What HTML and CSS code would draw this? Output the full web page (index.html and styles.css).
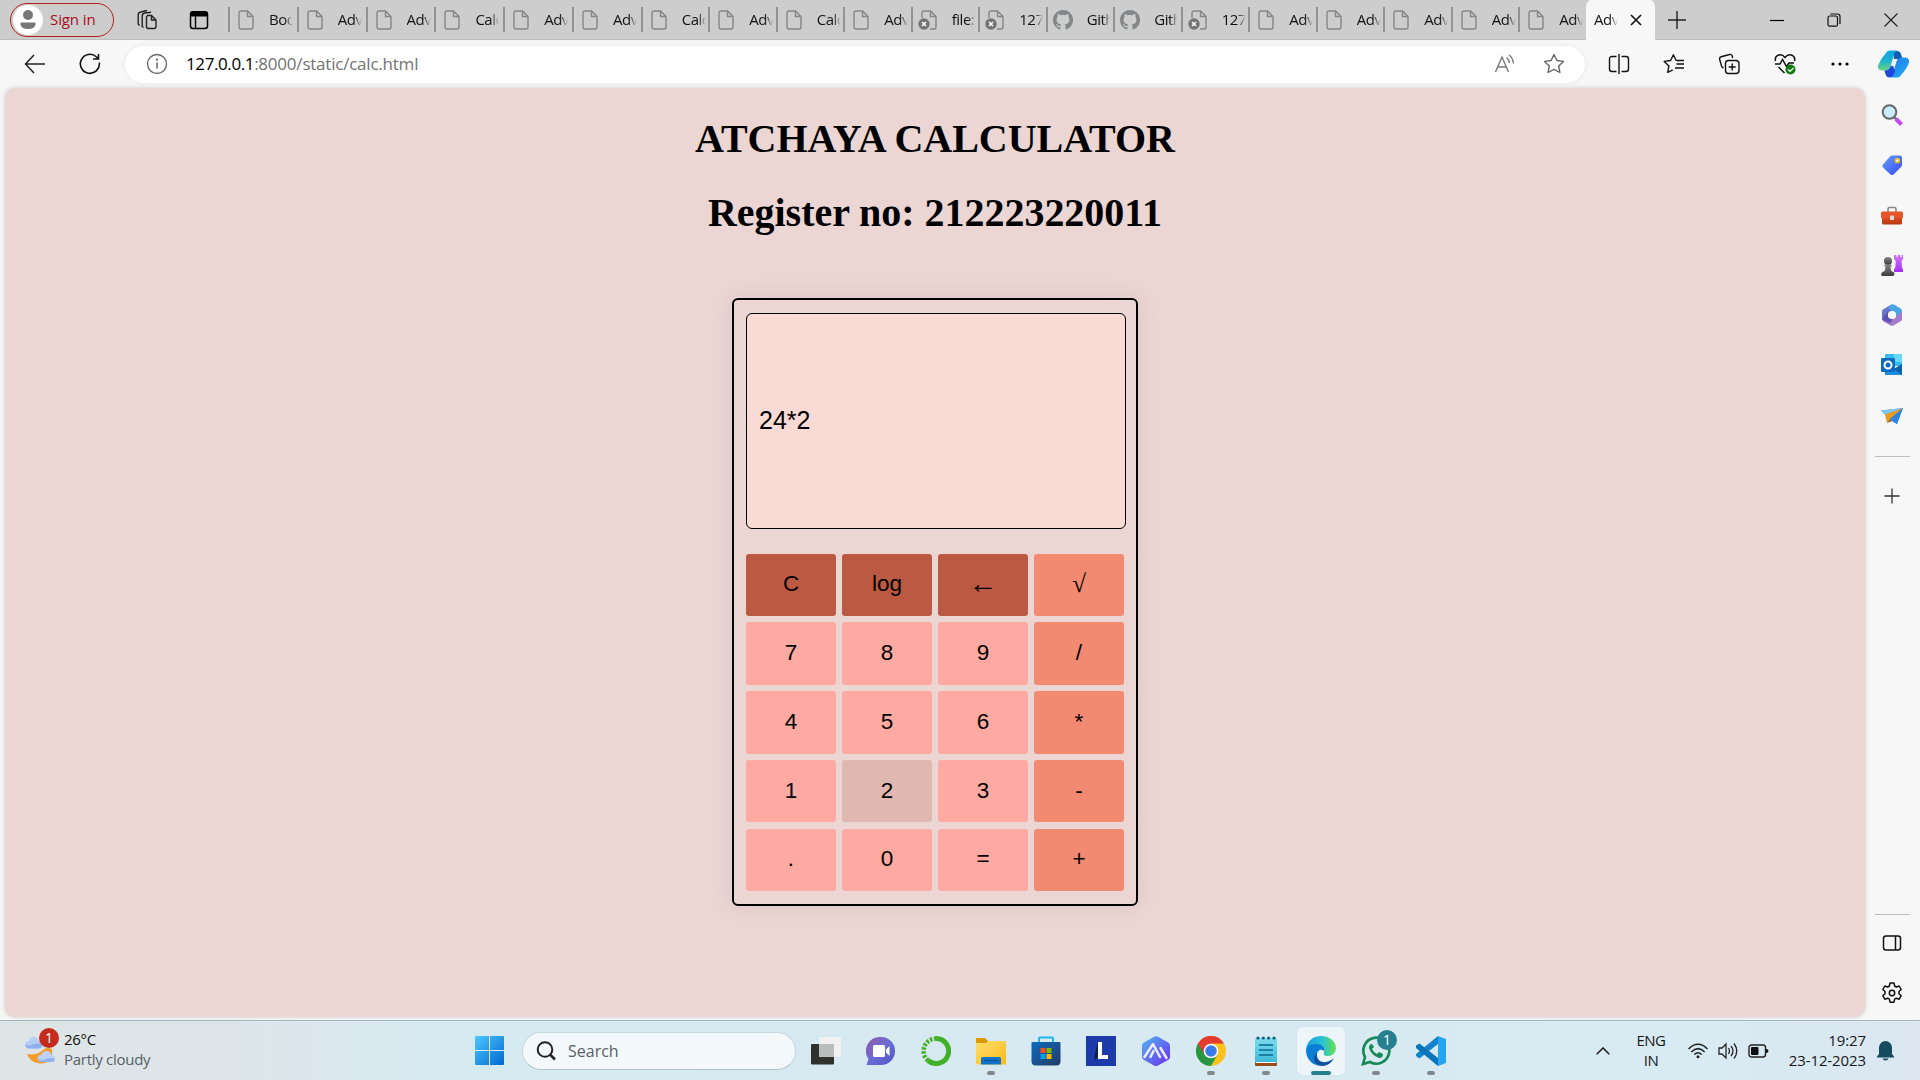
FILE: index.html
```html
<!DOCTYPE html>
<html lang="en">
<head>
<meta charset="utf-8">
<title>Advanced Calculator</title>
<link rel="stylesheet" href="styles.css">
</head>
<body>
<svg class="defs" width="0" height="0">
  <defs>
    <symbol id="file" viewBox="0 0 16 20"><path d="M3 1h6.500L15 6.500V17a2 2 0 0 1-2 2H3a2 2 0 0 1-2-2V3a2 2 0 0 1 2-2zM9.500 1v5.500H15" fill="none" stroke="#858585" stroke-width="1.400"/></symbol>
    <symbol id="filex" viewBox="0 0 20 20"><path d="M4 8V3a2 2 0 0 1 2-2h6.500L18 6.500V17a2 2 0 0 1-2 2h-4M12.500 1v5.500H18" fill="none" stroke="#858585" stroke-width="1.400"/><circle cx="6" cy="14" r="5.700" fill="#747474"/><path d="M4 12l4 4M8 12l-4 4" stroke="#fff" stroke-width="1.500"/></symbol>
    <symbol id="github" viewBox="0 0 16 16"><path fill="#858688" d="M8 0C3.580 0 0 3.580 0 8c0 3.540 2.290 6.530 5.470 7.590.4.070.55-.17.55-.38 0-.19-.01-.82-.01-1.490-2.010.37-2.530-.49-2.690-.94-.09-.23-.48-.94-.82-1.130-.28-.15-.68-.52-.01-.53.63-.01 1.080.58 1.230.82.72 1.210 1.870.87 2.330.66.07-.52.28-.87.51-1.070-1.780-.2-3.640-.89-3.640-3.950 0-.87.31-1.590.82-2.150-.08-.2-.36-1.020.08-2.120 0 0 .67-.21 2.200.82a7.600 7.600 0 0 1 4 0c1.530-1.040 2.200-.82 2.200-.82.44 1.100.16 1.920.08 2.120.51.56.82 1.270.82 2.150 0 3.070-1.870 3.750-3.650 3.950.29.25.54.73.54 1.480 0 1.070-.01 1.930-.01 2.200 0 .21.15.46.55.38A8 8 0 0 0 8 0z"/></symbol>
    <linearGradient id="gBlue" x1="0" y1="0" x2="1" y2="1"><stop offset="0" stop-color="#4cc9ff"/><stop offset="1" stop-color="#0067cf"/></linearGradient>
    <linearGradient id="gTag" x1="0" y1="0" x2="1" y2="1"><stop offset="0" stop-color="#62a2ff"/><stop offset="1" stop-color="#3a48f5"/></linearGradient>
    <linearGradient id="gRook" x1="0" y1="0" x2="0" y2="1"><stop offset="0" stop-color="#d378ff"/><stop offset="1" stop-color="#a42df0"/></linearGradient>
    <linearGradient id="gGrey" x1="0" y1="0" x2="0" y2="1"><stop offset="0" stop-color="#858585"/><stop offset="1" stop-color="#3c3c3c"/></linearGradient>
    <linearGradient id="gRed" x1="0" y1="0" x2="0" y2="1"><stop offset="0" stop-color="#d84b20"/><stop offset="1" stop-color="#b83510"/></linearGradient>
    <linearGradient id="gCopA" x1="0" y1="0" x2="0" y2="1"><stop offset="0" stop-color="#14a5e4"/><stop offset=".5" stop-color="#1bb0cf"/><stop offset="1" stop-color="#6ad67c"/></linearGradient>
    <linearGradient id="gCopB" x1="0" y1="0" x2="1" y2="1"><stop offset="0" stop-color="#2a70e2"/><stop offset="1" stop-color="#18b4f8"/></linearGradient>
    <linearGradient id="gFold" x1="0" y1="0" x2="1" y2="1"><stop offset="0" stop-color="#ffdf6c"/><stop offset="1" stop-color="#fbb91c"/></linearGradient>
    <linearGradient id="gChat" x1="0" y1="0" x2="1" y2="1"><stop offset="0" stop-color="#9558a7"/><stop offset=".5" stop-color="#6a6cd6"/><stop offset="1" stop-color="#5055c4"/></linearGradient>
    <linearGradient id="gStore" x1="0" y1="0" x2="1" y2="1"><stop offset="0" stop-color="#0d6cbd"/><stop offset="1" stop-color="#243a66"/></linearGradient>
    <linearGradient id="gHex" x1="0" y1="0" x2="1" y2="1"><stop offset="0" stop-color="#52b6ee"/><stop offset="1" stop-color="#6b2df0"/></linearGradient>
    <linearGradient id="gEdge" x1="0" y1="0" x2="1" y2="0"><stop offset="0" stop-color="#149bdf"/><stop offset=".55" stop-color="#2bc3d2"/><stop offset="1" stop-color="#66e04c"/></linearGradient>
    <linearGradient id="gNote" x1="0" y1="0" x2="0" y2="1"><stop offset="0" stop-color="#7bdcec"/><stop offset="1" stop-color="#3db7d8"/></linearGradient>
  </defs>
</svg>

<header class="tabstrip">
  <div class="signin"><span class="avatar"><svg width="30" height="30" viewBox="0 0 30 30"><circle cx="15" cy="10" r="5" fill="#777"/><path d="M7.500 17.500h15v2q-1 4.500-7.500 4.500t-7.500-4.500z" fill="#777"/></svg></span><span class="signin-text">Sign in</span></div>
  <svg class="workspaces" width="22" height="22" viewBox="0 0 22 22" fill="none" stroke="#222" stroke-width="1.400"><path d="M12.500 6.500h4L21 11v6.500a2 2 0 0 1-2 2h-5.500a2 2 0 0 1-2-2v-9a2 2 0 0 1 1-2zM16.500 6.500V11H21M8.500 18.500l-1.300-1V7q0-2.500 2.500-3l6.300-.8M4.500 16.500L3.200 15V6q0-2.500 2.500-3L12 1.500"/></svg>
  <svg class="tabmenu" width="20" height="20" viewBox="0 0 20 20"><rect x="1.500" y="2" width="17" height="16.500" rx="2.500" fill="none" stroke="#000" stroke-width="1.500"/><path d="M1 6.500V4q0-3 3-3h12q3 0 3 3v2.500z"/><path d="M6.500 6v12" stroke="#000" stroke-width="1.400"/></svg>
  <div class="tabs">
    <div class="tab wide"><svg><use href="#file"/></svg><span>Boo</span></div>
    <div class="tab wide"><svg><use href="#file"/></svg><span>Adv</span></div>
    <div class="tab wide"><svg><use href="#file"/></svg><span>Adv</span></div>
    <div class="tab wide"><svg><use href="#file"/></svg><span>Calc</span></div>
    <div class="tab wide"><svg><use href="#file"/></svg><span>Adv</span></div>
    <div class="tab wide"><svg><use href="#file"/></svg><span>Adv</span></div>
    <div class="tab"><svg><use href="#file"/></svg><span>Calc</span></div>
    <div class="tab"><svg><use href="#file"/></svg><span>Adv</span></div>
    <div class="tab"><svg><use href="#file"/></svg><span>Calc</span></div>
    <div class="tab"><svg><use href="#file"/></svg><span>Adv</span></div>
    <div class="tab big"><svg><use href="#filex"/></svg><span>file:</span></div>
    <div class="tab big"><svg><use href="#filex"/></svg><span>127</span></div>
    <div class="tab big"><svg><use href="#github"/></svg><span>Gith</span></div>
    <div class="tab big"><svg><use href="#github"/></svg><span>Gith</span></div>
    <div class="tab big"><svg><use href="#filex"/></svg><span>127</span></div>
    <div class="tab"><svg><use href="#file"/></svg><span>Adv</span></div>
    <div class="tab"><svg><use href="#file"/></svg><span>Adv</span></div>
    <div class="tab"><svg><use href="#file"/></svg><span>Adv</span></div>
    <div class="tab"><svg><use href="#file"/></svg><span>Adv</span></div>
    <div class="tab"><svg><use href="#file"/></svg><span>Adv</span></div>
  </div>
  <div class="tab-active"><span>Adv</span><svg width="12" height="12" viewBox="0 0 12 12"><path d="M1 1l10 10M11 1L1 11" stroke="#111" stroke-width="1.600"/></svg></div>
  <svg class="newtab" width="18" height="18" viewBox="0 0 18 18"><path d="M9 0v18M0 9h18" stroke="#222" stroke-width="1.400"/></svg>
  <div class="winctl">
    <svg width="14" height="14" viewBox="0 0 14 14"><path d="M0 7.500h14" stroke="#000" stroke-width="1.200"/></svg>
    <svg width="14" height="14" viewBox="0 0 14 14" fill="none" stroke="#111" stroke-width="1.200"><rect x="1" y="3" width="9.500" height="10.200" rx="1.800"/><path d="M3.500 1h7q2.500 0 2.500 2.500V11"/></svg>
    <svg width="14" height="14" viewBox="0 0 14 14"><path d="M.5.500l13 13M13.500.500l-13 13" stroke="#222" stroke-width="1.200"/></svg>
  </div>
</header>

<div class="toolbar">
  <svg class="back" width="22" height="20" viewBox="0 0 22 20" fill="none" stroke="#222" stroke-width="1.500"><path d="M10 1L1.500 10l8.500 9M1.500 10H21"/></svg>
  <svg class="reload" width="22" height="22" viewBox="0 0 22 22" fill="none" stroke="#111" stroke-width="1.600"><path d="M20.300 9.500A9.500 9.500 0 1 1 17.500 4L19 5.500M19.500 1v5h-5.500"/></svg>
  <div class="address">
    <svg width="22" height="22" viewBox="0 0 22 22"><circle cx="11" cy="11" r="9.500" fill="none" stroke="#666" stroke-width="1.300"/><path d="M11 9.500v6" stroke="#666" stroke-width="1.500"/><circle cx="11" cy="6.700" r="1.100" fill="#666"/></svg>
    <span class="url"><b>127.0.0.1</b>:8000/static/calc.html</span>
    <svg class="read" width="22" height="20" viewBox="0 0 22 20" fill="none" stroke="#777" stroke-width="1.400"><path d="M1.500 18L8 3l6.500 15M4 13h8M12.500 3.500q2.500 2 3 5.500M15 1q4 3 4.500 8.500"/></svg>
    <svg class="fav" width="22" height="22" viewBox="0 0 22 22" fill="none" stroke="#666" stroke-width="1.400" stroke-linejoin="round"><path d="M11 1.500l2.900 6 6.600.9-4.800 4.600 1.200 6.500L11 16.400l-5.900 3.100 1.200-6.500L1.500 8.400l6.600-.9z"/></svg>
  </div>
  <div class="actions">
    <svg width="22" height="22" viewBox="0 0 22 22" fill="none" stroke="#111" stroke-width="1.400"><path d="M8.500 3.500H4q-2.500 0-2.500 2.500v10q0 2.500 2.500 2.500h4.500M13.500 3.500H18q2.500 0 2.500 2.500v10q0 2.500-2.500 2.500h-4.500M11 1v20"/></svg>
    <svg width="22" height="22" viewBox="0 0 22 22" fill="none" stroke="#111" stroke-width="1.400" stroke-linejoin="round"><path d="M16 7.700l-3-.4-2.600-5.500-2.800 5.700L1.200 8.400l4.700 4.500-1.200 6.500 5-2.600M13.500 11H21M12 15h9M14 7.500h7"/></svg>
    <svg width="22" height="22" viewBox="0 0 22 22" fill="none" stroke="#111" stroke-width="1.400"><rect x="7.500" y="7.500" width="13.500" height="13" rx="3"/><path d="M14.200 10.500v7M10.700 14h7M5.500 15l-.8-.4q-1-.5-1.300-2L1.700 6.500Q1.200 4.500 3.200 3.700L11.500 1.500q2-.5 2.500 1l.7 2.500"/></svg>
    <svg width="22" height="22" viewBox="0 0 22 22" fill="none" stroke="#111" stroke-width="1.500"><path d="M1.500 8Q.5 4 4 2.200 8 .7 11 4.500 14 .7 18 2.200q3.500 1.800 2.500 6M1 11h5l2.500-4.500 4 7L15 10h5M4.500 14l6 6"/><circle cx="16.500" cy="16.500" r="5" fill="#107c10" stroke="none"/><path d="M14 16.500l2 2 3.500-3.500" stroke="#fff" stroke-width="1.200"/></svg>
    <svg width="22" height="22" viewBox="0 0 22 22"><circle cx="4" cy="11" r="1.600"/><circle cx="11" cy="11" r="1.600"/><circle cx="18" cy="11" r="1.600"/></svg>
  </div>
  <svg class="copilot" width="31" height="28" viewBox="0 0 31 28"><path d="M15 1h4q3 0 4 3l1.500 5H16z" fill="#135db0"/><path d="M8 3q1-2.500 4-2.500h8q-3 .3-4 4l-3.500 12q-1.200 4-5 4H4q-5-.5-4-5Q2.500 9 8 3z" fill="url(#gCopA)"/><path d="M23 25q-1 2.500-4 2.500h-8q3-.3 4-4l3.500-12q1.200-4 5-4H27q5 .5 4 5-2.500 7-8 12.500z" fill="url(#gCopB)"/><path d="M6.500 20.500q5 0 6.500-5l2.500 1q.5 3 1.500 3.500-1 7.500-6 7.500-3.500-.5-4.500-7z" fill="#1f48d8"/></svg>
</div>

<div class="middle">
  <main class="page">
    <h1>ATCHAYA CALCULATOR</h1>
    <h1>Register no: 212223220011</h1>
    <section class="calculator">
      <div class="display">24*2</div>
      <div class="keys">
        <div class="key clear">C</div><div class="key clear">log</div><div class="key clear arrow">←</div><div class="key op sqrt">√</div>
        <div class="key">7</div><div class="key">8</div><div class="key">9</div><div class="key op">/</div>
        <div class="key">4</div><div class="key">5</div><div class="key">6</div><div class="key op">*</div>
        <div class="key">1</div><div class="key hover">2</div><div class="key">3</div><div class="key op">-</div>
        <div class="key">.</div><div class="key">0</div><div class="key">=</div><div class="key op">+</div>
      </div>
    </section>
  </main>
  <aside class="sidebar">
    <svg viewBox="0 0 22 22"><path d="M13 13l7 7" stroke="#777" stroke-width="2.500"/><path d="M15 15l5.500 5.500" stroke="#c04af0" stroke-width="4"/><circle cx="8.500" cy="8" r="6.800" fill="#c9ecff" stroke="#666" stroke-width="2"/></svg>
    <svg viewBox="0 0 22 22"><path d="M11 1.500h8q2 0 2 2V11q0 1-1 2l-7.500 7.500q-1.500 1-3 0l-7.500-7q-1.500-1.500 0-3L9 2.500q1-1 2-1z" fill="url(#gTag)"/><circle cx="16.300" cy="6.500" r="2" fill="#fff" stroke="#e9bd20" stroke-width="1.700"/></svg>
    <svg viewBox="0 0 22 22"><path d="M7 8V5q0-1.500 1.500-1.500h5Q15 3.500 15 5v3" fill="none" stroke="#888" stroke-width="1.600"/><rect y="7.500" width="22" height="7" rx="1.500" fill="#e6552a"/><path d="M1 14h20v5q0 1.500-1.500 1.500h-17Q1 20.500 1 19z" fill="url(#gRed)"/><rect x="9" y="11.500" width="4" height="4.500" rx="1" fill="#ddd"/></svg>
    <svg viewBox="0 -1 22 22"><path d="M13 0h2.300v2h1.400V0h2.600v2h1.400V0H22v4l-1.500 2 .5 7 1 1v3h-9v-3l1.200-1 .5-7L13 4z" fill="url(#gRook)"/><circle cx="7" cy="6" r="4" fill="url(#gGrey)"/><path d="M3.500 9.500h7v2H9.500q0 4 2 6H2.500q2-2 2-6H3.500zM1 17.500q0-1 2-1h8q2.500 0 2.500 2.500 0 2-2 2H2q-2 0-2-1.500z" fill="url(#gGrey)"/></svg>
    <svg viewBox="0 0 22 22"><path d="M10.500.5L2 5.500q-1 .7-1 2V15l6 2.500V10l8-7z" fill="#6677c9"/><path d="M10.500.5q1.500-.5 3 .3L20 4.700q1 .8 1 2V16l-6-3.500V9L7 4.500z" fill="#48a6e5"/><path d="M21 7v8q0 1.500-1 2l-7.500 4.500q-1.500.7-3 0L3 17.700Q1.500 17 1 15l6-2 4 3 4-3z" fill="#a67acb"/><path d="M7 7.500L1 15q1 1.500 3 2l5 2 3-4-5-2z" fill="#5b53b5"/><circle cx="11" cy="11" r="4" fill="#f8f8f8"/></svg>
    <svg viewBox="0 0 22 22"><rect x="4" width="17" height="12" rx="1" fill="#36baf0"/><path d="M13 0h8v8h-8z" fill="#69d7fb"/><path d="M4 10l9 5 8-5v11H4z" fill="#1b8bdb"/><path d="M21 10v11l-8-6z" fill="#0c60ab"/><rect x="0" y="4" width="14" height="14" rx="1.200" fill="#0b6abf"/><circle cx="7" cy="11" r="3.500" fill="none" stroke="#fff" stroke-width="2"/></svg>
    <svg viewBox="0 0 22 22"><path d="M0 5.500L22 3l-6 16-5.500-3z" fill="#3f9df0"/><path d="M0 5.500L22 3 5 10z" fill="#7ac7fa"/><path d="M22 3L4 9.500 6 18l3-4z" fill="#e99b1c"/><path d="M22 3L9 14l7 5z" fill="#2b83e3"/><path d="M6 18l3-4 2 2z" fill="#9a5b0a"/></svg>
    <i class="rule"></i>
    <svg class="add" viewBox="0 0 22 22"><path d="M11 3.500v15M3.500 11h15" stroke="#333" stroke-width="1.300"/></svg>
    <i class="rule lower"></i>
    <svg class="panel" viewBox="0 0 22 22" fill="none" stroke="#111" stroke-width="1.500"><rect x="2.500" y="4" width="17" height="14" rx="2.500"/><path d="M14.500 4v14"/></svg>
    <svg class="gear" viewBox="0 0 22 22" fill="none" stroke="#111" stroke-width="1.500" stroke-linejoin="round"><path d="M9 1h4l.6 3 1.700 1 2.900-1 2 3.500-2.200 2v2.200l2.200 2-2 3.500-2.900-1-1.700 1-.6 3H9l-.6-3-1.700-1-2.900 1-2-3.500 2.200-2V9.500l-2.200-2 2-3.500 2.900 1 1.700-1z"/><circle cx="11" cy="11" r="2.700"/></svg>
  </aside>
</div>

<footer class="taskbar">
  <div class="weather">
    <svg width="32" height="32" viewBox="0 0 32 32"><path d="M2 20q11 2 17-5 3-2 8 0v8q-3 7-12 6.500Q5 28.500 2 20z" fill="#f39a28"/><path d="M4 14.500q-4-.5-4-4 .5-3.500 4-3.500Q5.500 3 9 3q3.500 0 5 4 3.500 0 3.500 4 0 3.500-4 3.500z" fill="#b4cdf7"/><path d="M0 10.500q4 2 8 0t9.500 0q-.5 4-4 4H4q-3.500-.5-4-4z" fill="#8fafea"/><path d="M16 28q-3.500-.5-3.500-4 .5-3 3.500-3 1.500-4 5.500-4t5 4q3.500 0 3.500 3.500t-3.500 3.500z" fill="#bdd2fa"/><path d="M13 25q4 2 8 0t9 0q-.5 3-3.500 3H16q-2.500 0-3-3z" fill="#93b3ed"/></svg>
    <span class="badge red">1</span>
    <div class="weather-text"><span>26°C</span><span class="dim">Partly cloudy</span></div>
  </div>
  <svg class="start" width="29" height="29" viewBox="0 0 29 29" fill="url(#gBlue)"><path d="M1 0h13v14H0V1q0-1 1-1zM15 0h13q1 0 1 1v13H15zM0 15h14v14H1q-1 0-1-1zM15 15h14v13q0 1-1 1H15z"/></svg>
  <div class="search"><svg width="20" height="20" viewBox="0 0 20 20" fill="none" stroke="#222" stroke-width="2"><circle cx="9" cy="8.500" r="7.300"/><path d="M14 13.500l5 5" stroke-width="2.500"/></svg><span>Search</span></div>
  <div class="apps">
    <div class="app"><svg viewBox="0 0 30 30"><rect y="8" width="23" height="20.500" rx="1" fill="#30302e"/><rect x="8" y="1" width="22" height="20" rx="1" fill="#f1f1f1"/><path d="M8 8h15v13H8z" fill="#b9bdbb"/></svg></div>
    <div class="app"><svg viewBox="0 0 30 30"><path d="M15 1a14 14 0 1 1 0 28H.5l2-6A14 14 0 0 1 15 1z" fill="url(#gChat)"/><rect x="7" y="9" width="12" height="12" rx="1.500" fill="#fff"/><path d="M20 13.500l3.500-3.500v10L20 16.500z" fill="#fff"/></svg></div>
    <div class="app"><svg viewBox="0 0 30 30" fill="none" stroke="#43b02a"><path d="M15 2.500a12.500 12.500 0 1 1-8 22" stroke-width="5"/><path d="M7 24.500A12.500 12.500 0 0 1 15 2.500" stroke-width="4.500" stroke-dasharray="2.500 1.500"/></svg></div>
    <div class="app run"><svg viewBox="0 0 30 30"><path d="M0 3q0-1 1-1h8l3 3v5H0z" fill="#dc9800"/><path d="M0 7h10l2-2h17q1 0 1 1v21q0 1.500-1 1.500H1q-1 0-1-1z" fill="url(#gFold)"/><path d="M5 28.500v-6Q5 21 6.500 21h17q1.500 0 1.500 1.500v6z" fill="#0f74c6"/><path d="M8 24.500h14" stroke="#0a4c8b"/></svg></div>
    <div class="app"><svg viewBox="0 0 30 30"><path d="M8 7V2.500q0-1 1-1h12q1 0 1 1V7" fill="none" stroke="#1fb6ef" stroke-width="2"/><path d="M.5 7q0-1 1-1h27q1 0 1 1v18q0 4.500-4 4.500H5q-4.500 0-4.500-4.500z" fill="url(#gStore)"/><path d="M9.500 12h5v5h-5z" fill="#f15022"/><path d="M15.500 12h5v5h-5z" fill="#7eb900"/><path d="M9.500 18h5v5h-5z" fill="#00a3ee"/><path d="M15.500 18h5v5h-5z" fill="#ffb800"/></svg></div>
    <div class="app"><svg viewBox="0 0 30 30"><path d="M0 0h30v30H0z" fill="#1d3aab"/><path d="M12 6L8.500 19v5L12 22z" fill="#0d2344"/><path d="M12 6h4v13h6v4H12z" fill="#fff"/></svg></div>
    <div class="app"><svg viewBox="0 0 30 30"><path d="M13 .7q2-1 4 0l10.500 6q1.500 1 1.500 3v11q0 2-1.500 3L17 29.500q-2 1-4 0L2.500 23.700q-1.500-1-1.500-3v-11q0-2 1.500-3z" fill="url(#gHex)"/><path d="M3.500 21L12 8l7 13M9.500 21l3-6M19.500 12l6 10" fill="none" stroke="#eeeaff" stroke-width="2.500" stroke-linecap="round" stroke-linejoin="round"/></svg></div>
    <div class="app run"><svg viewBox="0 0 30 30"><circle cx="15" cy="15" r="15" fill="#fcc31e"/><path d="M15 15L2 7.500A15 15 0 0 0 15 30l6.500-11.500z" fill="#259745"/><path d="M2 7.500A15 15 0 0 1 28 7.500H15l-6.500 11z" fill="#e33b2e"/><circle cx="15" cy="15" r="7.300" fill="#fff"/><circle cx="15" cy="15" r="5.800" fill="#3a7cec"/></svg></div>
    <div class="app run"><svg viewBox="0 0 30 30"><rect x="4" y="24" width="22" height="6" rx="1" fill="#964d16"/><rect x="4" y="2" width="22" height="25" rx="1.500" fill="url(#gNote)"/><path d="M5 26.500h20" stroke="#fff"/><path d="M8 9h14M8 14h14M8 19h14" stroke="#096b8e" stroke-width="1.700"/><g fill="#155c7b"><circle cx="7" cy="2" r="1.600"/><circle cx="12.300" cy="2" r="1.600"/><circle cx="17.600" cy="2" r="1.600"/><circle cx="23" cy="2" r="1.600"/></g></svg></div>
    <div class="app run current"><svg viewBox="0 0 30 30"><path d="M0 14C1 5 7 0 15 0c9 0 15 6 15 12 0 5-4 8-8 8-4 0-5-2-4-4 1-3-1-7-7-7-6 0-10 2-11 5z" fill="url(#gEdge)"/><path d="M0 14c1-4 5-6 10-6 7 0 9 4 8 7-4-3-7 0-7 4 0 5 4 10 9 10C9 32 0 25 0 14z" fill="#0b7fd6"/><path d="M11 17c-2 6 4 10 9 9 3-.5 6-2 8-4-2 4-6 8-12 8-8-1-11-8-5-13z" fill="#10509d"/></svg></div>
    <div class="app run"><svg viewBox="0 0 30 30"><path d="M2 28l2-7a13 13 0 1 1 5 5z" fill="none" stroke="#168a54" stroke-width="2.700"/><path d="M11 8q-3 0-3 4 2 7 10 10 4 0 4-4l-4-2-2 2q-3-1-5-5l2-2z" fill="#168a54"/></svg><span class="badge teal">1</span></div>
    <div class="app run"><svg viewBox="0 0 30 30"><path d="M22 0l8 3v24l-8 3V0z" fill="#27a5ef"/><path d="M22 0v8L3.500 22.500 0 20v-2z" fill="#1582ce"/><path d="M22 30v-8L3.500 7.500 0 9.500V12z" fill="#0874ba"/></svg></div>
  </div>
  <div class="tray">
    <svg class="chev" width="14" height="8" viewBox="0 0 14 8" fill="none" stroke="#222" stroke-width="1.600"><path d="M.7 7.300L7 1l6.300 6.300"/></svg>
    <div class="lang"><span>ENG</span><span>IN</span></div>
    <svg class="wifi" width="20" height="16" viewBox="0 0 20 16" fill="none" stroke="#222" stroke-width="1.500"><path d="M.5 6q9.500-9.500 19 0M3.300 9q6.700-6.700 13.400 0M6.300 11.500q3.700-3.500 7.400 0"/><circle cx="10" cy="13.700" r="1.500" fill="#222" stroke="none"/></svg>
    <svg class="sound" width="20" height="18" viewBox="0 0 20 18" fill="none" stroke="#222" stroke-width="1.300"><path d="M1 6h3l4-4v14l-4-4H1zM10.500 6q2 3 0 6M13 4q4 5 0 10M16 1.500q5.500 7.500 0 15"/></svg>
    <svg class="batt" width="21" height="14" viewBox="0 0 21 14"><rect x="1" y="1" width="16.500" height="12" rx="2.500" fill="none" stroke="#222" stroke-width="1.400"/><rect x="3" y="3" width="7.500" height="8" rx="1" fill="#111"/><path d="M18 5q2.500 0 2.500 2T18 9z" fill="#111"/></svg>
    <div class="clock"><span>19:27</span><span>23-12-2023</span></div>
    <svg class="bell" width="17" height="20" viewBox="0 0 17 20" fill="#154b5c"><path d="M2 13V6.500Q3 0 8.500 0T15 6.500V13l2 2.500v1H0v-1zM5.500 17.500h6q-.5 2-3 2t-3-2z"/></svg>
  </div>
</footer>
</body>
</html>
```
FILE: styles.css
```css
* { box-sizing: border-box; }
body {
  margin: 0;
  width: 1920px;
  height: 1080px;
  overflow: hidden;
  display: flex;
  flex-direction: column;
  background: #f7f7f7;
  font-family: "Open Sans", "Noto Sans", sans-serif;
  color: #111;
}
svg { display: block; flex: none; }
.defs { position: absolute; }

/* Tab strip */
.tabstrip {
  height: 40px;
  flex: none;
  display: flex;
  align-items: center;
  padding-left: 10px;
  background: #cdcdcd;
  border-bottom: 1px solid #bdbdbd;
}
.signin {
  width: 103.500px;
  height: 34px;
  display: flex;
  align-items: center;
  gap: 7px;
  padding-left: 2px;
  border: 1.500px solid #b0201f;
  border-radius: 17px;
  color: #a80f12;
  font-size: 15px;
  letter-spacing: -.1px;
}
.signin-text { white-space: nowrap; margin-top: -1px; }
.avatar { width: 30px; height: 30px; border-radius: 50%; background: #fff; }
.workspaces { margin-left: 21.500px; }
.tabmenu { margin-left: 32px; }
.tabs { display: flex; margin-left: 19px; width: 1358px; height: 39px; align-items: center; }
.tab {
  width: 67.500px;
  height: 25px;
  flex: none;
  display: flex;
  align-items: center;
  border-left: 2px solid #929292;
  padding-left: 8px;
  overflow: hidden;
}
.tab.wide { width: 68.800px; }
.tab svg { width: 16px; height: 20px; }
.tab.big { padding-left: 5px; }
.tab.big svg { width: 20px; }
.tab span, .tab-active span {
  width: 24px;
  flex: none;
  margin-left: 15px;
  margin-top: -1px;
  overflow: hidden;
  white-space: nowrap;
  font-size: 15px;
  letter-spacing: -.5px;
  line-height: 24px;
  -webkit-mask-image: linear-gradient(90deg, #000 65%, transparent);
  mask-image: linear-gradient(90deg, #000 65%, transparent);
}
.tab.big span { margin-left: 14px; }
.tab-active {
  width: 69px;
  height: 41px;
  flex: none;
  display: flex;
  align-items: center;
  padding-left: 8px;
  gap: 12px;
  background: #f7f7f7;
  border-radius: 8px 8px 0 0;
}
.tab-active span { margin-left: 0; }
.newtab { margin-left: 13px; }
.winctl { display: flex; gap: 43px; margin-left: 84px; }

/* Toolbar */
.toolbar { height: 48px; flex: none; display: flex; align-items: center; padding-left: 24px; }
.reload { margin-left: 33px; }
.address {
  width: 1460px;
  height: 37px;
  margin-left: 24px;
  display: flex;
  align-items: center;
  padding-left: 21px;
  background: #fff;
  border-radius: 19px;
  box-shadow: 0 0 4px #e4e4e4;
}
.url { flex: 1; margin-left: 18px; margin-top: -2px; font-size: 17px; letter-spacing: -.22px; color: #737373; }
.url b { font-weight: 400; color: #000; letter-spacing: -.4px; }
.read { margin-right: 27px; }
.fav { margin-right: 20px; }
.actions { display: flex; gap: 33.200px; margin-left: 23px; }
.copilot { margin-left: 27px; }

/* Page and sidebar */
.middle { flex: 1; display: flex; padding: 0 0 3px 5px; min-height: 0; }
.page {
  width: 1860px;
  height: 929px;
  display: flex;
  flex-direction: column;
  align-items: center;
  background: #ebd6d4;
  border-radius: 10px;
  box-shadow: 0 0 4px #c9c9c9;
  font-family: "Liberation Serif", serif;
  color: #000;
}
.page h1 { margin: 28px 0 0; font-size: 40px; line-height: 46px; font-weight: 700; letter-spacing: -.03px; }
.page h1:first-child { margin-top: 28px; }
.calculator {
  width: 406px;
  height: 608px;
  margin-top: 62px;
  padding: 13px 12px;
  border: 2px solid #000;
  border-radius: 6px;
  box-shadow: 0 0 25px rgba(0, 0, 0, .08);
  font-family: "Liberation Sans", sans-serif;
}
.display {
  width: 380px;
  height: 216px;
  display: flex;
  align-items: center;
  padding: 0 0 2px 12px;
  border: 1px solid #000;
  border-radius: 6px;
  background: #fadad4;
  font-size: 25px;
}
.keys {
  display: grid;
  grid-template-columns: repeat(4, 90px);
  grid-auto-rows: 62.500px;
  gap: 6.250px 6px;
  margin-top: 24.500px;
}
.key {
  display: flex;
  align-items: center;
  justify-content: center;
  padding-bottom: 1px;
  border-radius: 3px;
  background: #ffa9a3;
  font-size: 22.500px;
}
.key.clear { background: #bc5942; }
.key.op { background: #f28a72; }
.key.hover { background: #e1b8b1; }
.key.arrow { font-family: "Liberation Serif", serif; font-size: 29px; padding-bottom: 2px; }
.key.sqrt { font-family: "Liberation Serif", serif; font-size: 25px; }

.sidebar { width: 54px; display: flex; flex-direction: column; align-items: center; padding-top: 15.500px; }
.sidebar svg { width: 22px; height: 22px; margin-bottom: 28.200px; }
.rule { width: 35px; height: 1px; flex: none; background: #bcbcbc; margin-top: 1.500px; }
.sidebar .add { margin: 28px 0 0; }
.lower { margin-top: 407px; }
.sidebar .panel { margin: 17px 0 28px; }
.sidebar .gear { margin: 0; }

/* Taskbar */
.taskbar {
  height: 60px;
  flex: none;
  display: flex;
  align-items: center;
  border-top: 1px solid #a9b8bf;
  background: linear-gradient(90deg, #dde5e6, #dde5ea 12%, #d6eaf2 24%, #d7e9f1 60%, #d8ebf3 88%, #dbe6f0);
  font-size: 15px;
}
.weather { width: 475px; display: flex; padding-left: 25px; position: relative; }
.weather svg { margin-top: 1px; }
.weather-text { display: flex; flex-direction: column; margin-left: 7px; line-height: 20px; margin-top: -4px; letter-spacing: -.28px; }
.dim { color: #596064; }
.badge {
  position: absolute;
  width: 20px;
  height: 20px;
  border-radius: 50%;
  color: #fff;
  text-align: center;
  font-size: 14px;
  line-height: 20px;
}
.badge.red { left: 39px; top: -5px; background: #c42b1c; }
.badge.teal { left: 25px; top: 3px; background: #26808f; }
.search {
  width: 274px;
  height: 38px;
  margin-left: 18px;
  display: flex;
  align-items: center;
  gap: 12px;
  padding-left: 13px;
  border: 1px solid #c5d6df;
  border-bottom-color: #aebfc8;
  border-radius: 19px;
  background: #f3f8fb;
  color: #596064;
  font-size: 16px;
}
.apps { display: flex; gap: 7px; margin-left: 6px; }
.app {
  width: 48px;
  height: 48px;
  display: flex;
  flex-direction: column;
  align-items: center;
  padding-top: 9px;
  position: relative;
  border-radius: 5px;
}
.app svg { width: 30px; height: 30px; }
.app.run::after { content: ""; width: 8px; height: 4px; margin-top: 5px; border-radius: 2px; background: #7f888c; }
.app.current { background: #edf5fa; box-shadow: 0 0 1px #b7c8d1; }
.app.current::after { width: 20px; background: #26808f; }
.tray { display: flex; align-items: center; margin-left: 141px; color: #181818; }
.lang, .clock { display: flex; flex-direction: column; line-height: 20px; white-space: nowrap; margin-top: -2px; }
.lang { width: 40px; margin-left: 21px; align-items: center; letter-spacing: -.5px; }
.wifi { margin-left: 17px; }
.sound { margin-left: 10px; }
.batt { margin-left: 10px; }
.clock { width: 97px; align-items: flex-end; letter-spacing: -.1px; }
.bell { margin-left: 11px; }
```
